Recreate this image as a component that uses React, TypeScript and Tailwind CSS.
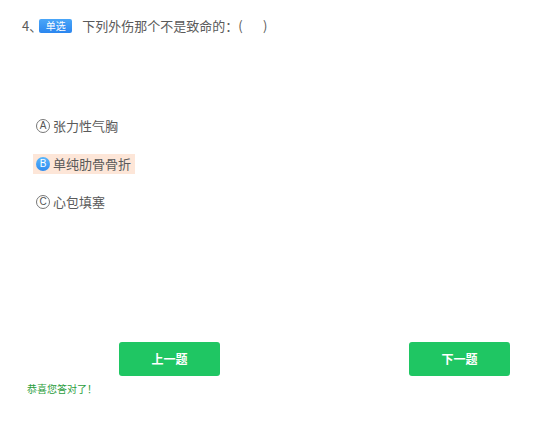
export default function App() {
  const options = [
    { key: "A", text: "张力性气胸", picked: false },
    { key: "B", text: "单纯肋骨骨折", picked: true },
    { key: "C", text: "心包填塞", picked: false },
  ];

  return (
    <div
      className="w-[557px] h-[425px] bg-white text-[#5a5a5a] relative"
      style={{ fontFamily: '"Noto Sans CJK SC", "Noto Sans", sans-serif' }}
    >
      <div className="flex items-center pt-[16px] pl-[22px] text-[13px] leading-[20px]">
        <span>4、</span>
        <span className="ml-[-3px] w-[33px] text-center h-[14px] leading-[14px] text-[10px] text-white rounded-[2px] bg-gradient-to-b from-[#4aa6f8] to-[#2b86ef]">
          单选
        </span>
        <span className="ml-[10px]">下列外伤那个不是致命的：(&nbsp;&nbsp;&nbsp;&nbsp;&nbsp;&nbsp;&nbsp;)</span>
      </div>

      <div className="flex flex-col gap-[18px] mt-[80px] pl-[33px]">
        {options.map((o) => (
          <div
            key={o.key}
            className={
              "flex items-center self-start h-[20px] pl-[3px] pr-[4px] text-[13px] " +
              (o.picked ? "bg-[#fde6d8]" : "")
            }
          >
            <span
              className={
                "w-[14px] h-[14px] rounded-full flex items-center justify-center text-[10px] leading-none mr-[3px] " +
                (o.picked
                  ? "bg-gradient-to-b from-[#5ab6fb] to-[#2f8cf0] text-white"
                  : "border border-[#777] text-[#555]")
              }
              style={{ fontFamily: '"Liberation Sans", sans-serif' }}
            >
              {o.key}
            </span>
            <span>{o.text}</span>
          </div>
        ))}
      </div>

      <div className="flex justify-between mt-[130px] pl-[119px] pr-[47px]">
        <button className="w-[101px] h-[34px] rounded-[3px] bg-[#1fc663] text-white text-[12px] font-bold">
          上一题
        </button>
        <button className="w-[101px] h-[34px] rounded-[3px] bg-[#1fc663] text-white text-[12px] font-bold">
          下一题
        </button>
      </div>

      <div className="pl-[27px] mt-[5px] text-[10px] text-[#2a9d3c]">恭喜您答对了！</div>
    </div>
  );
}
